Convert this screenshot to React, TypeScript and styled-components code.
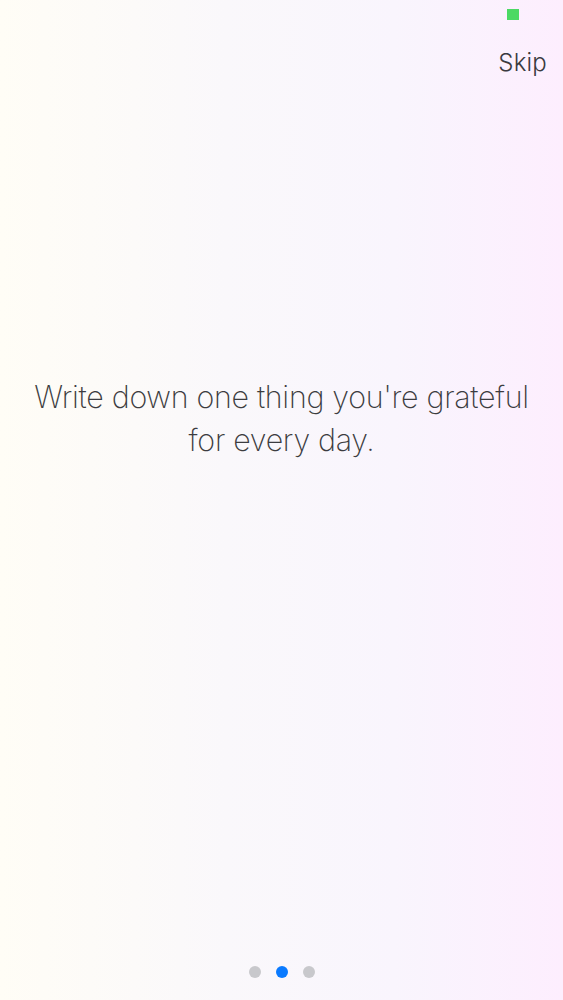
import React from "react";
import styled, { createGlobalStyle } from "styled-components";

const Global = createGlobalStyle`
  html, body { margin: 0; padding: 0; }
  body { font-family: "Inter", "Liberation Sans", sans-serif; }
`;

const Screen = styled.div`
  width: 563px;
  height: 1000px;
  box-sizing: border-box;
  display: flex;
  flex-direction: column;
  background: linear-gradient(to right, #fffdf6 0%, #faf8fb 40%, #f9f5fd 70%, #fdeefe 100%);
  overflow: hidden;
`;

const TopBar = styled.div`
  display: flex;
  flex-direction: column;
  align-items: flex-end;
  padding: 9px 16px 0 0;
`;

const StatusDot = styled.div`
  width: 12px;
  height: 11px;
  background: #4cd964;
  margin-right: 28px;
`;

const SkipButton = styled.button`
  margin-top: 28px;
  border: none;
  background: none;
  padding: 0;
  font-family: "Inter", "Liberation Sans", sans-serif;
  font-weight: 300;
  font-size: 24px;
  color: #3a3a40;
  letter-spacing: 0.2px;
`;

const Body = styled.div`
  flex: 1;
  display: flex;
  align-items: center;
  justify-content: center;
  padding: 0 20px;
`;

const Message = styled.p`
  margin: 0 0 206px;
  text-align: center;
  font-family: "Inter", "Liberation Sans", sans-serif;
  font-weight: 200;
  font-size: 30.4px;
  line-height: 43px;
  color: #3c3c40;
  letter-spacing: -0.3px;
`;

const Pager = styled.div`
  display: flex;
  justify-content: center;
  gap: 15px;
  padding-bottom: 22px;
`;

const Dot = styled.span<{ $active?: boolean }>`
  width: 12px;
  height: 12px;
  border-radius: 50%;
  background: ${(p) => (p.$active ? "#0a7aff" : "#c8c8cc")};
`;

export default function App() {
  return (
    <>
      <Global />
      <Screen>
        <TopBar>
          <StatusDot />
          <SkipButton>Skip</SkipButton>
        </TopBar>
        <Body>
          <Message>
            Write down one thing you're grateful
            <br />
            for every day.
          </Message>
        </Body>
        <Pager>
          <Dot />
          <Dot $active />
          <Dot />
        </Pager>
      </Screen>
    </>
  );
}
